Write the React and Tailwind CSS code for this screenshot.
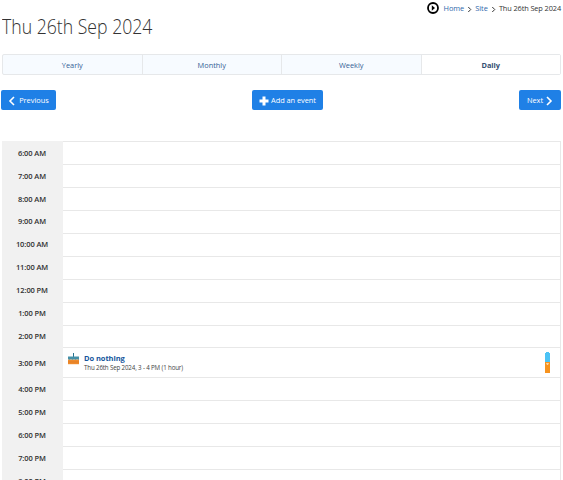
const before = ['6:00 AM', '7:00 AM', '8:00 AM', '9:00 AM', '10:00 AM', '11:00 AM', '12:00 PM', '1:00 PM', '2:00 PM'];
const after = ['4:00 PM', '5:00 PM', '6:00 PM', '7:00 PM', '8:00 PM'];

function Chevron({ className, left }) {
  return (
    <svg className={className} viewBox="0 0 8 10" fill="none" stroke="currentColor" strokeWidth="1.6">
      <path d={left ? 'M6 1L2 5l4 4' : 'M2 1l4 4-4 4'} />
    </svg>
  );
}

function Row({ time, tall, children }) {
  return (
    <div className={`flex shrink-0 ${tall ? 'h-[30px]' : 'h-[22.95px]'}`}>
      <div className="flex w-[61px] shrink-0 items-center justify-center bg-[#f1f1f1] pt-[1.6px] pr-px text-[7.5px] font-semibold tracking-[-0.1px] text-[#303030]">
        {time}
      </div>
      <div className="flex flex-1 border-t border-r border-[#e8e8e8]">{children}</div>
    </div>
  );
}

function Cake() {
  return (
    <svg className="mt-[5px] ml-[5px] h-3 w-[11px] shrink-0" viewBox="0 0 11 12">
      <path d="M5 0h1v5H5z" fill="#26728f" />
      <path d="M0 3.5h11v4.5H0z" fill="#4590a8" />
      <path d="M0 6l1.5.8L3 6l1.5.8L6 6l1.5.8L9 6l2 .8V8H0z" fill="#d9b58c" />
      <path d="M0 7h11v4.2H0z" fill="#ef8b2c" />
      <path d="M0 8.6h11v.8H0z" fill="#de7a24" />
    </svg>
  );
}

export default function App() {
  return (
    <div className="flex h-[480px] w-[563px] flex-col overflow-hidden bg-white pr-[2px] pl-[2px] font-['Open_Sans','Noto_Sans',sans-serif] text-[7.4px] text-[#333]">
      <div className="flex h-4 shrink-0 items-center justify-end">
        <svg className="mr-[4.5px] h-3 w-3" viewBox="0 0 12 12">
          <circle cx="6" cy="6" r="5" fill="none" stroke="#000" strokeWidth="1.8" />
          <path d="M4.8 3.3L8 6 4.8 8.7z" fill="#000" />
        </svg>
        <span className="mt-[2px] tracking-[-0.08px] text-[#2f68ab]">Home</span>
        <Chevron className="mx-[3px] mt-[2px] h-[7px] w-[5px]" />
        <span className="mt-[2px] text-[#2f68ab]">Site</span>
        <Chevron className="mx-[3px] mt-[2px] h-[7px] w-[5px]" />
        <span className="mt-[2px] tracking-[-0.12px]">Thu 26th Sep 2024</span>
      </div>
      <h1 className="h-[38px] w-[180px] shrink-0 origin-left scale-x-[0.905] text-[19.5px] leading-[21px] font-light whitespace-nowrap">Thu 26th Sep 2024</h1>
      <div className="flex h-[21px] shrink-0 rounded-[2px] border border-[#e6e8ea] bg-[#f7fbff] text-[#355f96]">
        {['Yearly', 'Monthly', 'Weekly'].map((tab) => (
          <div key={tab} className="flex flex-1 items-center justify-center border-r border-[#e6e8ea] pt-[2px]">{tab}</div>
        ))}
        <div className="flex flex-1 items-center justify-center bg-white pt-[2px] font-bold text-[#354f72]">Daily</div>
      </div>
      <div className="mt-[15px] -ml-px flex h-5 shrink-0 justify-between text-white">
        <div className="flex w-[55px] items-center justify-center gap-[3px] rounded-[2px] bg-[#1f80e6] pt-[2px]">
          <Chevron left className="h-[10px] w-[8px]" />
          <span>Previous</span>
        </div>
        <div className="flex w-[71px] items-center justify-center gap-[2px] rounded-[2px] bg-[#1f80e6] pt-px">
          <svg className="mt-px h-[10px] w-[10px]" viewBox="0 0 10 10"><path d="M5 .5v9M.5 5h9" stroke="#fff" strokeWidth="3" /></svg>
          <span className="tracking-[-0.05px]">Add an event</span>
        </div>
        <div className="flex w-[42px] items-center justify-center gap-[2px] rounded-[2px] bg-[#1f80e6] pt-px">
          <span>Next</span>
          <Chevron className="h-[10px] w-[8px]" />
        </div>
      </div>
      <div className="mt-[31px] flex shrink-0 flex-col">
        {before.map((t) => <Row key={t} time={t} />)}
        <Row time="3:00 PM" tall>
          <Cake />
          <div className="ml-[5px] flex-1">
            <div className="mt-[5px] text-[7.5px] leading-[10px] font-bold tracking-[-0.06px] text-[#14559c]">Do nothing</div>
            <div className="text-[6.2px] leading-[9px] tracking-[-0.15px] text-[#444]">Thu 26th Sep 2024, 3 - 4 PM (1 hour)</div>
          </div>
          <svg className="mt-1 mr-[10px] h-[22px] w-[5px]" viewBox="0 0 5 22">
            <path d="M0 1h1V0h3v1h1v9H0z" fill="#4cc3f5" />
            <path d="M0 10h5v11H0z" fill="#f7931e" />
            <path d="M1 11h3L3 13H2z" fill="#fbd9a8" />
          </svg>
        </Row>
        {after.map((t) => <Row key={t} time={t} />)}
      </div>
    </div>
  );
}
